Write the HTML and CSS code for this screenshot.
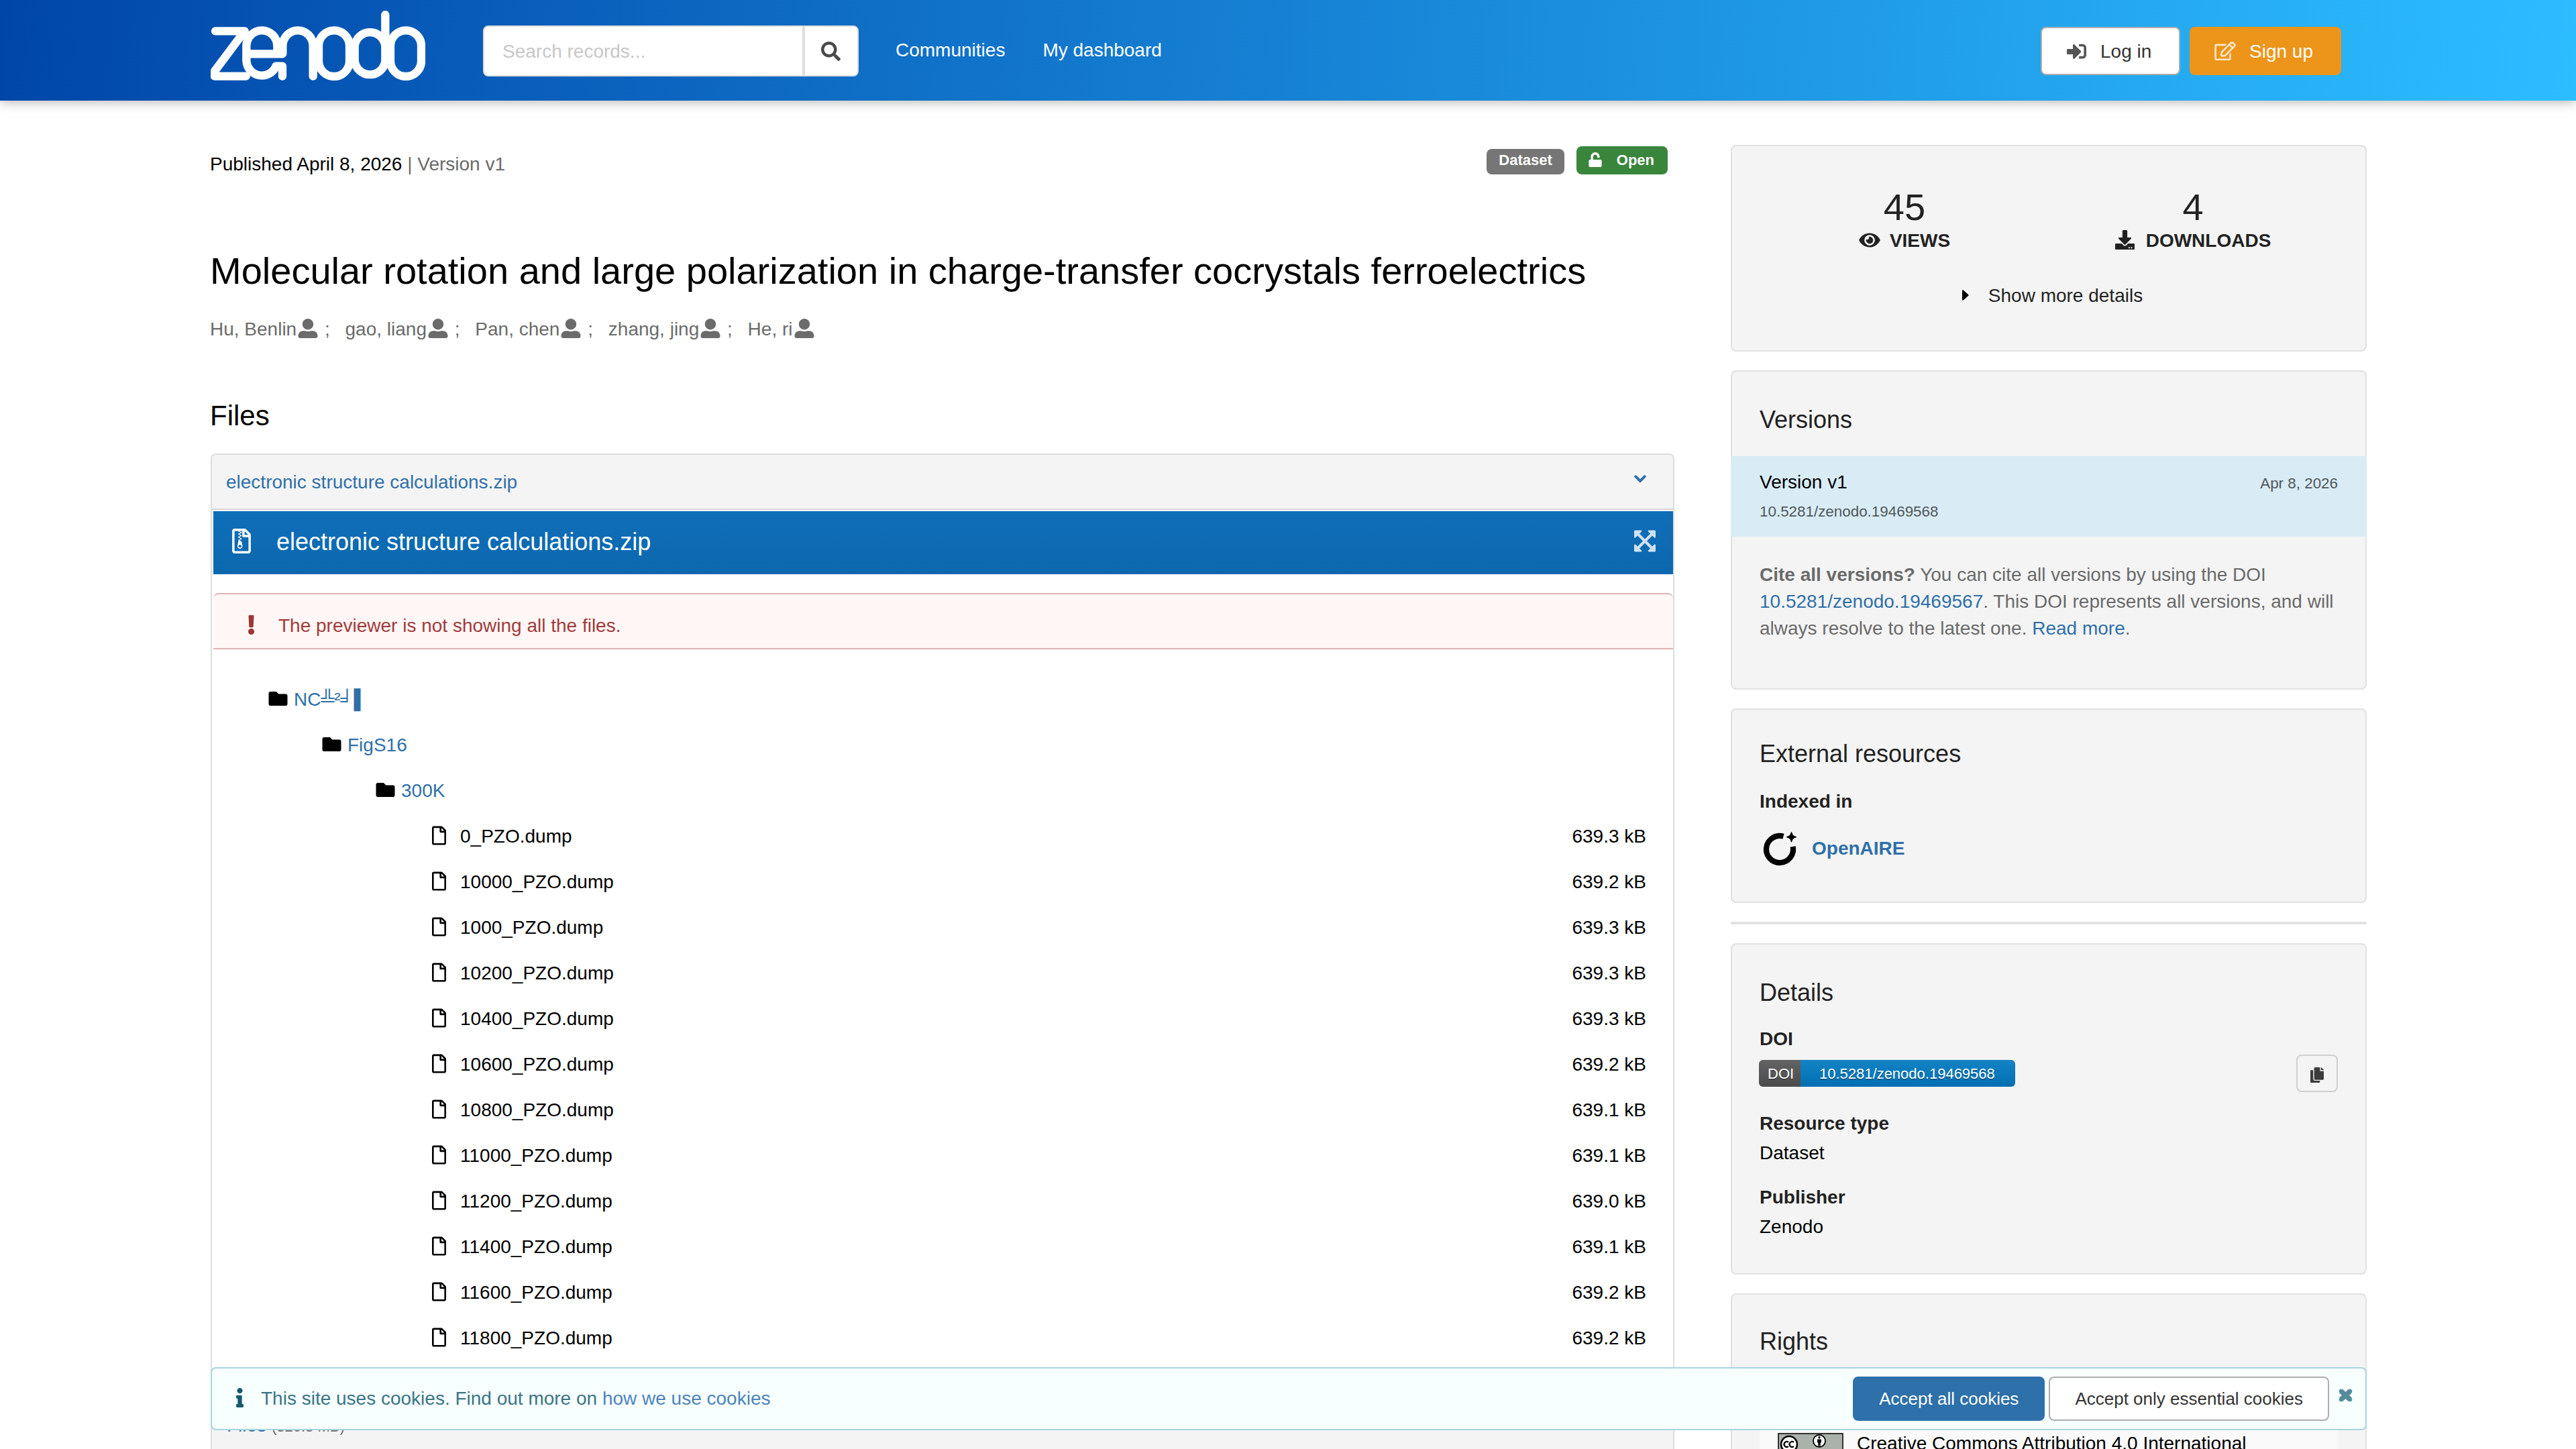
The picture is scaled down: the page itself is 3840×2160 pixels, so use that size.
FILE: index.html
```html
<!DOCTYPE html>
<html lang="en">
<head>
<meta charset="utf-8">
<title>Molecular rotation and large polarization in charge-transfer cocrystals ferroelectrics</title>
<link rel="stylesheet" href="styles.css">
</head>
<body>
<svg class="sprite" aria-hidden="true">
  <symbol id="i-file" viewBox="0 0 384 512"><path d="M369.9 97.9L286 14C277 5 264.8-.1 252.1-.1H48C21.5 0 0 21.5 0 48v416c0 26.5 21.5 48 48 48h288c26.5 0 48-21.5 48-48V131.9c0-12.7-5.1-25-14.1-34zM332.1 128H256V51.9l76.1 76.1zM48 464V48h160v104c0 13.3 10.7 24 24 24h104v288H48z"/></symbol>
  <symbol id="i-folder" viewBox="0 64 512 384"><path d="M464 128H272l-64-64H48C21.49 64 0 85.49 0 112v288c0 26.51 21.49 48 48 48h416c26.51 0 48-21.49 48-48V176c0-26.51-21.49-48-48-48z"/></symbol>
  <symbol id="i-user" viewBox="0 0 512 512"><path d="M256 288c79.5 0 144-64.5 144-144S335.5 0 256 0 112 64.5 112 144s64.5 144 144 144zm128 32h-55.1c-22.2 10.2-46.9 16-72.9 16s-50.6-5.8-72.9-16H128C57.3 320 0 377.3 0 448v16c0 26.5 21.5 48 48 48h416c26.5 0 48-21.5 48-48v-16c0-70.7-57.3-128-128-128z"/></symbol>
</svg>

<header class="topbar">
  <svg class="logo" viewBox="42 48 960 312" role="img" aria-label="Zenodo">
    <g fill="none" stroke="#fff" stroke-width="37" stroke-linecap="round" stroke-linejoin="round">
      <path d="M63 139H194L60 318V341H200"/>
      <path d="M202 241H362M340 230V206A69 70 0 0 0 202 206V272A69 70 0 0 0 334 296H363V341"/>
      <path d="M364 240V206A68 70 0 0 1 500 206V341"/>
      <rect x="525" y="136" width="138" height="206" rx="69"/>
      <path d="M823 66V206A69 70 0 0 0 686 206V272A69 70 0 0 0 823 272V206"/>
      <rect x="846" y="136" width="138" height="206" rx="69"/>
    </g>
  </svg>
  <div class="search">
    <span class="search-input">Search records...</span>
    <span class="search-btn"><svg width="29" height="29" viewBox="0 0 512 512"><path d="M505 442.7L405.3 343c-4.5-4.5-10.6-7-17-7H372c27.6-35.3 44-79.7 44-128C416 93.1 322.9 0 208 0S0 93.1 0 208s93.1 208 208 208c48.3 0 92.7-16.4 128-44v16.3c0 6.4 2.5 12.5 7 17l99.7 99.7c9.4 9.4 24.6 9.4 33.9 0l28.3-28.3c9.4-9.4 9.4-24.6.1-34zM208 336c-70.7 0-128-57.2-128-128 0-70.7 57.2-128 128-128 70.7 0 128 57.2 128 128 0 70.7-57.2 128-128 128z"/></svg></span>
  </div>
  <nav class="nav"><a>Communities</a><a>My dashboard</a></nav>
  <div class="auth">
    <a class="login"><svg width="29" height="29" viewBox="0 0 512 512"><path d="M416 448h-84c-6.6 0-12-5.4-12-12v-40c0-6.600 5.400-12 12-12h84c17.700 0 32-14.300 32-32V160c0-17.700-14.300-32-32-32h-84c-6.600 0-12-5.400-12-12V76c0-6.600 5.400-12 12-12h84c53 0 96 43 96 96v192c0 53-43 96-96 96zm-47-201L201 79c-15-15-41-4.500-41 17v96H24c-13.300 0-24 10.700-24 24v96c0 13.300 10.700 24 24 24h136v96c0 21.500 26 32 41 17l168-168c9.300-9.400 9.300-24.600 0-34z"/></svg>Log in</a>
    <a class="signup"><svg width="32" height="28" viewBox="0 0 576 512"><path d="M402.300 344.900l32-32c5-5 13.700-1.500 13.700 5.700V464c0 26.500-21.500 48-48 48H48c-26.500 0-48-21.500-48-48V112c0-26.500 21.500-48 48-48h273.500c7.100 0 10.700 8.600 5.700 13.700l-32 32c-1.500 1.500-3.500 2.300-5.700 2.300H48v352h352V350.500c0-2.100.8-4.100 2.300-5.600zm156.600-201.800L296.300 405.700l-90.400 10c-26.200 2.900-48.500-19.200-45.600-45.600l10-90.400L432.900 17.100c22.900-22.900 59.900-22.900 82.700 0l43.200 43.200c22.900 22.900 22.900 60 .1 82.800zM460.100 174L402 115.900 216.200 301.800l-7.300 65.300 65.300-7.300L460.100 174zm64.800-79.700l-43.200-43.200c-4.100-4.100-10.800-4.100-14.800 0L436 82l58.100 58.100 30.900-30.900c4-4.200 4-10.800-.1-14.900z"/></svg>Sign up</a>
  </div>
</header>

<div class="page">
  <main class="main">
    <div class="meta">
      <p>Published April 8, 2026 <span class="muted">| Version v1</span></p>
      <div class="labels">
        <span class="label grey">Dataset</span>
        <span class="label green"><svg width="20" height="22" viewBox="0 0 448 512"><path d="M400 256H152V152.900c0-39.600 31.700-72.500 71.300-72.900 40-.4 72.700 32.100 72.700 72v16c0 13.300 10.700 24 24 24h32c13.300 0 24-10.700 24-24v-16C376 68 307.500-.3 223.500 0 139.500.3 72 69.500 72 153.500V256H48c-26.500 0-48 21.500-48 48v160c0 26.500 21.500 48 48 48h352c26.500 0 48-21.500 48-48V304c0-26.500-21.500-48-48-48z"/></svg>Open</span>
      </div>
    </div>
    <h1>Molecular rotation and large polarization in charge-transfer cocrystals ferroelectrics</h1>
    <ul class="creators">
      <li>Hu, Benlin<svg><use href="#i-user"/></svg> ;</li>
      <li>gao, liang<svg><use href="#i-user"/></svg> ;</li>
      <li>Pan, chen<svg><use href="#i-user"/></svg> ;</li>
      <li>zhang, jing<svg><use href="#i-user"/></svg> ;</li>
      <li>He, ri<svg><use href="#i-user"/></svg></li>
    </ul>
    <h2>Files</h2>
    <section class="preview">
      <div class="preview-head"><a>electronic structure calculations.zip</a>
        <svg width="18" height="12" viewBox="0 0 18 12"><path d="M2.300 2.300L9 9L15.700 2.300" fill="none" stroke="#2f6fa9" stroke-width="4" stroke-linecap="round"/></svg></div>
      <div class="preview-body">
        <div class="bluebar">
          <svg width="28" height="37" viewBox="0 0 384 512"><path d="M128.300 160h32v32h-32zm64-96h-32v32h32zm-64 32v32h32V96zm64 32h-32v32h32zm177.600-30.100L286 14C277 5 264.800-.1 252.100-.1H48C21.500 0 0 21.500 0 48v416c0 26.500 21.500 48 48 48h288c26.500 0 48-21.500 48-48V131.900c0-12.700-5.100-25-14.100-34zM256 51.900l76.100 76.100H256zM336 464H48V48h79.700v16h32V48H208v104c0 13.300 10.700 24 24 24h104zM194.200 265.700c-1.100-5.600-6-9.700-11.800-9.700h-22.100v-32h-32v32l-19.700 97.100C102 385.600 126.800 416 160 416c33.100 0 57.900-30.200 51.500-62.600zm-33.900 124.400c-17.900 0-32.400-12.100-32.400-27s14.500-27 32.400-27 32.400 12.100 32.400 27-14.500 27-32.400 27zm32-198.100h-32v32h32z"/></svg>
          <span>electronic structure calculations.zip</span>
          <svg class="expand" width="32" height="33" viewBox="0 0 32 33"><path d="M6 6.500L26 26.500M26 6.500L6 26.500" stroke="#cfe1f0" stroke-width="4.200"/><path fill="#cfe1f0" d="M1.500 .5H10a1.200 1.200 0 0 1 .8 2.200L2.200 11.300A1.300 1.300 0 0 1 0 10.500V2A1.500 1.500 0 0 1 1.500 .5zM30.500 .5H22a1.200 1.200 0 0 0-.8 2.200L29.800 11.300A1.300 1.300 0 0 0 32 10.500V2A1.500 1.500 0 0 0 30.500 .5zM1.500 32.500H10a1.200 1.200 0 0 0 .8-2.200L2.200 21.700A1.300 1.300 0 0 0 0 22.500V31A1.500 1.500 0 0 0 1.500 32.500zM30.500 32.500H22a1.200 1.200 0 0 1-.8-2.200L29.800 21.700A1.300 1.300 0 0 1 32 22.500V31A1.500 1.500 0 0 1 30.500 32.500z"/></svg>
        </div>
        <div class="warning">
          <svg width="11" height="29" viewBox="0 0 192 512"><path d="M176 432c0 44.112-35.888 80-80 80s-80-35.888-80-80 35.888-80 80-80 80 35.888 80 80zM25.260 25.199l13.600 272C39.499 309.972 50.041 320 62.830 320h66.340c12.789 0 23.331-10.028 23.970-22.801l13.600-272C167.425 11.490 156.496 0 142.770 0H49.230C35.504 0 24.575 11.490 25.260 25.199z"/></svg>
          The previewer is not showing all the files.
        </div>
        <ul class="tree">
          <li class="dir l1"><svg><use href="#i-folder"/></svg><a>NC╩²╛▌</a></li>
          <li class="dir l2"><svg><use href="#i-folder"/></svg><a>FigS16</a></li>
          <li class="dir l3"><svg><use href="#i-folder"/></svg><a>300K</a></li>
          <li class="doc"><svg><use href="#i-file"/></svg><span>0_PZO.dump</span><b>639.3 kB</b></li>
          <li class="doc"><svg><use href="#i-file"/></svg><span>10000_PZO.dump</span><b>639.2 kB</b></li>
          <li class="doc"><svg><use href="#i-file"/></svg><span>1000_PZO.dump</span><b>639.3 kB</b></li>
          <li class="doc"><svg><use href="#i-file"/></svg><span>10200_PZO.dump</span><b>639.3 kB</b></li>
          <li class="doc"><svg><use href="#i-file"/></svg><span>10400_PZO.dump</span><b>639.3 kB</b></li>
          <li class="doc"><svg><use href="#i-file"/></svg><span>10600_PZO.dump</span><b>639.2 kB</b></li>
          <li class="doc"><svg><use href="#i-file"/></svg><span>10800_PZO.dump</span><b>639.1 kB</b></li>
          <li class="doc"><svg><use href="#i-file"/></svg><span>11000_PZO.dump</span><b>639.1 kB</b></li>
          <li class="doc"><svg><use href="#i-file"/></svg><span>11200_PZO.dump</span><b>639.0 kB</b></li>
          <li class="doc"><svg><use href="#i-file"/></svg><span>11400_PZO.dump</span><b>639.1 kB</b></li>
          <li class="doc"><svg><use href="#i-file"/></svg><span>11600_PZO.dump</span><b>639.2 kB</b></li>
          <li class="doc"><svg><use href="#i-file"/></svg><span>11800_PZO.dump</span><b>639.2 kB</b></li>
        </ul>
      </div>
    </section>
    <section class="filelist"><a>Files</a> <small>(320.3 MB)</small></section>
  </main>

  <aside class="side">
    <section class="card stats">
      <div class="counts">
        <div><p class="num">45</p><p class="cap"><svg width="32" height="28" viewBox="0 0 576 512"><path d="M572.520 241.400C518.290 135.590 410.930 64 288 64S57.680 135.640 3.480 241.410a32.350 32.350 0 0 0 0 29.190C57.710 376.410 165.070 448 288 448s230.320-71.640 284.520-177.410a32.350 32.350 0 0 0 0-29.190zM288 400a144 144 0 1 1 144-144 143.930 143.930 0 0 1-144 144zm0-240a95.310 95.310 0 0 0-25.310 3.790 47.850 47.850 0 0 1-66.900 66.900A95.780 95.780 0 1 0 288 160z"/></svg>VIEWS</p></div>
        <div><p class="num">4</p><p class="cap dl"><svg width="29" height="29" viewBox="0 0 512 512"><path d="M216 0h80c13.300 0 24 10.700 24 24v168h87.700c17.800 0 26.700 21.500 14.100 34.100L269.700 378.300c-7.500 7.500-19.800 7.500-27.300 0L90.100 226.100c-12.600-12.600-3.700-34.100 14.100-34.100H192V24c0-13.300 10.700-24 24-24zm296 376v112c0 13.300-10.700 24-24 24H24c-13.300 0-24-10.700-24-24V376c0-13.300 10.700-24 24-24h146.700l49 49c20.100 20.100 52.500 20.100 72.600 0l49-49H488c13.300 0 24 10.700 24 24zm-124 88c0-11-9-20-20-20s-20 9-20 20 9 20 20 20 20-9 20-20zm64 0c0-11-9-20-20-20s-20 9-20 20 9 20 20 20 20-9 20-20z"/></svg>DOWNLOADS</p></div>
      </div>
      <p class="more"><svg width="10" height="16" viewBox="0 0 10 16"><path d="M0 1.200A1 1 0 0 1 1.700 .5L9.300 7.300a1 1 0 0 1 0 1.400L1.700 15.500A1 1 0 0 1 0 14.800z"/></svg>Show more details</p>
    </section>

    <section class="card versions">
      <h3>Versions</h3>
      <div class="version">
        <p class="vrow"><span>Version v1</span><small>Apr 8, 2026</small></p>
        <p class="vdoi">10.5281/zenodo.19469568</p>
      </div>
      <p class="cite"><strong>Cite all versions?</strong> You can cite all versions by using the DOI <a>10.5281/zenodo.19469567</a>. This DOI represents all versions, and will always resolve to the latest one. <a>Read more</a>.</p>
    </section>

    <section class="card external">
      <h3>External resources</h3>
      <h4>Indexed in</h4>
      <p class="openaire"><svg width="52" height="52" viewBox="0 0 52 52"><path d="M31.500 6.800A20 20 0 1 0 45.600 22" fill="none" stroke="#000" stroke-width="8.200"/><path d="M43.500 .5C44.600 5.200 46 6.600 50.700 7.700C46 8.800 44.600 10.200 43.500 15C42.400 10.200 41 8.800 36.300 7.700C41 6.600 42.400 5.200 43.500 .5z" stroke="#000" stroke-width="1.200"/></svg><a>OpenAIRE</a></p>
    </section>

    <hr>

    <section class="card details">
      <h3>Details</h3>
      <h4>DOI</h4>
      <div class="doi-row">
        <span class="badge"><span>DOI</span><span>10.5281/zenodo.19469568</span></span>
        <span class="copy"><svg width="20" height="23" viewBox="0 0 448 512"><path d="M320 448v40c0 13.255-10.745 24-24 24H24c-13.255 0-24-10.745-24-24V120c0-13.255 10.745-24 24-24h72v296c0 30.879 25.121 56 56 56h168zm0-344V0H152c-13.255 0-24 10.745-24 24v368c0 13.255 10.745 24 24 24h272c13.255 0 24-10.745 24-24V128H344c-13.200 0-24-10.800-24-24zm120.971-31.029L375.029 7.029A24 24 0 0 0 358.059 0H352v96h96v-6.059a24 24 0 0 0-7.029-16.970z"/></svg></span>
      </div>
      <h4>Resource type</h4><p>Dataset</p>
      <h4 class="pub">Publisher</h4><p>Zenodo</p>
    </section>

    <section class="card rights">
      <h3>Rights</h3>
      <div class="license">
        <svg width="98" height="36" viewBox="0 0 98 36"><rect x="1" y="1" width="96" height="34" fill="#aab2ab" stroke="#000" stroke-width="1.500"/><circle cx="17" cy="17" r="12" fill="#fff" stroke="#000" stroke-width="2.500"/><path d="M16 13.800a4 4 0 1 0 0 6.400M24 13.800a4 4 0 1 0 0 6.400" fill="none" stroke="#000" stroke-width="2.200"/><circle cx="62" cy="12" r="9" fill="#fff" stroke="#000" stroke-width="1.800"/><circle cx="62" cy="6.800" r="1.700"/><path d="M59 9.500h6v5h-1.300v5h-3.400v-5H59z"/></svg>
        <span>Creative Commons Attribution 4.0 International</span>
      </div>
    </section>
  </aside>
</div>

<div class="cookies">
  <svg width="11" height="29" viewBox="0 0 192 512"><path d="M20 424.229h20V279.771H20c-11.046 0-20-8.954-20-20V212c0-11.046 8.954-20 20-20h112c11.046 0 20 8.954 20 20v212.229h20c11.046 0 20 8.954 20 20V492c0 11.046-8.954 20-20 20H20c-11.046 0-20-8.954-20-20v-47.771c0-11.046 8.954-20 20-20zM96 0C56.235 0 24 32.235 24 72s32.235 72 72 72 72-32.235 72-72S135.764 0 96 0z"/></svg>
  <p>This site uses cookies. Find out more on <a>how we use cookies</a></p>
  <span class="btn primary">Accept all cookies</span>
  <span class="btn">Accept only essential cookies</span>
  <svg class="close" width="23" height="22" viewBox="0 0 23 22"><path d="M4.500 4.500L18.500 17.500M18.500 4.500L4.500 17.500" stroke="#558c9a" stroke-width="7.500"/><path d="M4.500 4.500L18.500 17.500M18.500 4.500L4.500 17.500" stroke="#558c9a" stroke-width="5.500" stroke-linecap="round"/></svg>
</div>
</body>
</html>
```
FILE: styles.css
```css
* { box-sizing: border-box; }
html, body { margin: 0; height: 2160px; overflow: hidden; }
body {
  position: relative;
  background: #fff;
  color: #000;
  font: 28px/40px "Liberation Sans", Arial, sans-serif;
}
h1, h2, h3, h4, p, ul { margin: 0; padding: 0; font-weight: 400; }
ul { list-style: none; }
a { color: #2f6fa9; }
svg { display: block; flex: none; }
.sprite { position: absolute; width: 0; height: 0; }
.muted { color: #6a6a6a; }

.topbar {
  display: flex;
  align-items: flex-start;
  height: 150px;
  padding: 0 350px 0 314px;
  background: linear-gradient(95deg, #0046a9, #2cbdff);
  box-shadow: 0 2px 16px rgba(0, 0, 0, .3);
}
.logo { width: 320px; height: 104px; margin-top: 16px; }
.search {
  display: flex;
  width: 560px;
  height: 76px;
  margin: 38px 0 0 86px;
  border: 2px solid #dedede;
  border-radius: 8px;
  background: #fff;
}
.search-input { flex: 1; padding: 17px 0 0 27px; color: #c7c7c7; }
.search-btn {
  display: flex;
  align-items: center;
  justify-content: center;
  width: 82px;
  padding-right: 1px;
  border-left: 4px solid #dedede;
}
.search-btn svg { fill: #494949; }
.nav { display: flex; gap: 56px; margin: 55px 0 0 55px; }
.nav a { color: #fff; }
.auth { display: flex; gap: 14px; margin: 40px 0 0 auto; }
.auth a {
  display: flex;
  align-items: center;
  height: 72px;
  padding-top: 2px;
  border-radius: 8px;
}
.auth svg { margin-top: -2px; }
.login { width: 208px; padding-left: 37px; border: 2px solid #adadad; background: #fff; color: #333; gap: 21px; }
.login svg { fill: #555; }
.signup { width: 226px; padding-left: 37px; background: #ec951a; color: #fff; gap: 20px; }
.signup svg { fill: #fbe6c8; }

.page { display: flex; gap: 84px; height: 2010px; padding: 66px 312px 0 314px; overflow: hidden; }
.main { width: 2182px; }
.meta { display: flex; justify-content: space-between; padding: 0 10px 0 0; height: 130px; }
.meta p { padding-top: 9px; margin-left: -1px; }
.labels { display: flex; gap: 18px; align-items: flex-end; height: 44px; }
.label {
  display: flex;
  align-items: center;
  height: 38px;
  padding: 0 18px;
  border-radius: 8px;
  color: #fff;
  font: bold 22px/38px "Liberation Sans", Arial, sans-serif;
}
.label.grey { background: #767676; padding-bottom: 4px; }
.label.green { height: 42px; background: #3a853c; gap: 22px; padding-right: 20px; }
.label svg { margin-top: -2px; fill: #fff; }
h1 { margin-left: -1px; font-size: 56px; line-height: 72px; padding-top: 22px; white-space: nowrap; }
.creators { display: flex; gap: 22.8px; margin: 31px 0 0 -1px; color: #6b6b6b; }
.creators li { display: flex; white-space: pre; }
.creators svg { width: 30px; height: 29px; margin: 4px 2px 0 2px; fill: #6b6b6b; }
h2 { margin: 82px 0 0 -1px; font-size: 42px; line-height: 54px; }

.preview {
  margin-top: 29px;
  border: 2px solid #ddd;
  border-bottom: 0;
  border-radius: 8px 8px 0 0;
}
.preview-head {
  display: flex;
  justify-content: space-between;
  height: 82px;
  padding: 21px 40px 0 21px;
  background: #f4f4f4;
  border-bottom: 2px solid #d4d4d5;
  border-radius: 6px 6px 0 0;
}
.preview-head svg { margin-top: 9px; }
.preview-body { height: 1322px; padding: 2px 0 0 2px; }
.bluebar {
  display: flex;
  height: 94px;
  padding: 0 26px 0 28px;
  background: linear-gradient(#0f6eb9, #0c68ae);
  color: #fff;
  font-size: 36px;
  line-height: 91px;
}
.bluebar svg { margin: 26px 38px 0 0; fill: #fff; }
.bluebar .expand { margin: 28px 0 0 auto; }
.warning {
  display: flex;
  gap: 35px;
  height: 84px;
  margin-top: 28px;
  padding: 27px 0 0 51px;
  border: solid #e0b4b4;
  border-width: 2px 0;
  border-radius: 8px 8px 0 0;
  background: #fff6f6;
  color: #a03c3a;
}
.warning svg { margin-top: 4px; fill: #9f3633; }
.tree { padding: 41px 40px 0 82px; }
.tree li { display: flex; height: 68px; line-height: 68px; }
.dir svg { width: 29px; height: 21px; margin: 22px 9px 0 0; }
.l2 { padding-left: 80px; }
.l3 { padding-left: 160px; }
.doc { padding-left: 244px; }
.doc svg { width: 21px; height: 29px; margin: 18px 21px 0 0; }
.doc b { margin-left: auto; font-weight: 400; }
.filelist {
  height: 120px;
  padding: 21px 22px;
  border: 2px solid #ddd;
  border-bottom: 0;
  background: #f4f4f4;
}
.filelist small { font-size: 22px; color: #6a6a6a; }

.side { width: 948px; color: #222; }
.card {
  margin-bottom: 28px;
  padding: 48px 41px 0;
  border: 2px solid #e1e1e1;
  border-radius: 8px;
  background: #f4f4f4;
}
.card h3 { font-size: 36px; line-height: 46px; }
.card h4 { font-weight: 700; }
.stats { height: 308px; padding: 57px 42px 0; }
.counts { display: flex; }
.counts div { flex: 1; }
.num { font-size: 56px; line-height: 68px; text-align: center; }
.cap { display: flex; justify-content: center; gap: 14px; margin-top: -4px; font-weight: 700; line-height: 40px; }
.cap svg { margin-top: 5px; fill: #222; }
.cap.dl { gap: 17px; }
.cap.dl svg { margin-top: 4px; }
.more { display: flex; justify-content: center; gap: 29px; margin-top: 42px; padding-left: 11px; }
.more svg { margin-top: 11px; }
.versions { height: 476px; padding-top: 49px; }
.version { height: 120px; margin: 31px -43px 0; padding: 19px 43px 0; background: #d9ecf5; }
.vrow { display: flex; justify-content: space-between; color: #000; }
.vrow small, .vdoi { font-size: 22.4px; color: #50565a; }
.vrow small { padding-top: 2px; }
.vdoi { margin-top: 2px; }
.cite { margin-top: 37px; margin-right: -6px; color: #6a6a6a; }
.external { height: 290px; padding-top: 43px; }
.external h4 { margin-top: 28px; }
.openaire { display: flex; gap: 22px; padding-left: 4px; font-weight: 700; margin-top: 14px; }
.openaire svg { margin-top: 11px; }
.openaire a { padding-top: 16px; }
hr { height: 4px; margin: 0 0 28px; border: 0; border-radius: 2px; background: #e1e1e1; }
.details { height: 494px; }
.details h3 { margin-top: 1px; }
.details h4 { margin-top: 26px; }
.doi-row { display: flex; justify-content: space-between; height: 56px; margin-top: 3px; }
.badge {
  display: flex;
  height: 40px;
  margin: 8px 0 0 -1px;
  border-radius: 6px;
  overflow: hidden;
  color: #fff;
  font-size: 22px;
  text-shadow: 0 2px 0 rgba(1, 1, 1, .3);
}
.badge span { padding-top: 1px; }
.badge span:first-child { width: 62px; padding-left: 13px; background: linear-gradient(#636363, #4b4b4b); }
.badge span:last-child { width: 320px; padding-left: 28px; background: linear-gradient(#1483c5, #0070b2); }
.copy {
  display: flex;
  align-items: center;
  justify-content: center;
  width: 62px;
  border: 2px solid #d0d0d0;
  border-radius: 8px;
}
.copy svg { fill: #3c3c3c; margin-top: 4px; }
.details h4 + p { margin-top: 4px; color: #000; }
.details .doi-row + h4 { margin-top: 27px; }
.rights { height: 400px; padding-top: 47px; }
.license { display: flex; gap: 20px; margin-top: 79px; padding: 32px 27px 0; height: 200px; background: #fafafa; color: #000; }
.license svg { margin-top: 2px; }
.license span { margin-top: -2px; }

/* The consent bar floats over the bottom of the page */
.cookies {
  position: absolute;
  left: 314px;
  top: 2038px;
  display: flex;
  width: 3214px;
  height: 94px;
  padding: 12px 18px 0 36px;
  border: 2px solid #a9d5de;
  border-radius: 8px;
  background: #f8ffff;
}
.cookies > svg { margin-top: 17px; fill: #14596f; }
.cookies p { flex: 1; margin: 13px 0 0 26px; color: #3a7585; }
.cookies p a { color: #4c84bb; }
.btn {
  height: 66px;
  margin-right: 6px;
  padding: 0 37px;
  border: 2px solid #adadad;
  border-radius: 8px;
  background: #fff;
  color: #333;
  font-size: 26px;
  line-height: 63px;
}
.btn.primary { border-color: #2e70a9; background: #2e70a9; color: #fff; }
.cookies .close { margin-left: 7px; }
```
